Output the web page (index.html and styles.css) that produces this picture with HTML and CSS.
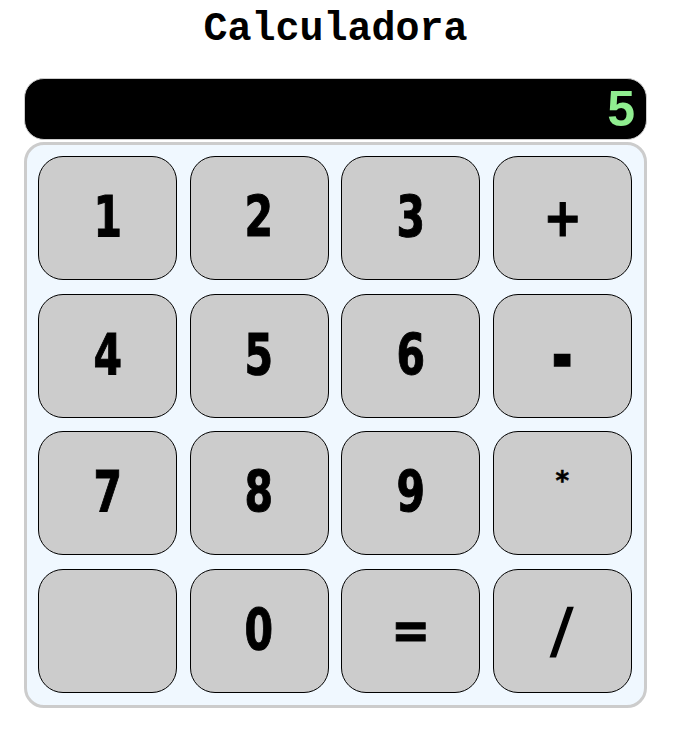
FILE: index.html
```html
<!DOCTYPE html>
<html lang="es">
<head>
<meta charset="utf-8">
<title>Calculadora</title>
<link rel="stylesheet" href="styles.css">
</head>
<body>
<div class="calc">
  <h1 class="title">Calculadora</h1>
  <div class="display">5</div>
  <div class="keypad">
    <button class="key"><span class="glyph">1</span></button>
    <button class="key"><span class="glyph">2</span></button>
    <button class="key"><span class="glyph">3</span></button>
    <button class="key"><span class="glyph glyph-op">+</span></button>
    <button class="key"><span class="glyph">4</span></button>
    <button class="key"><span class="glyph">5</span></button>
    <button class="key"><span class="glyph">6</span></button>
    <button class="key"><span class="glyph glyph-minus">-</span></button>
    <button class="key"><span class="glyph">7</span></button>
    <button class="key"><span class="glyph">8</span></button>
    <button class="key"><span class="glyph">9</span></button>
    <button class="key"><span class="glyph glyph-star">*</span></button>
    <button class="key"></button>
    <button class="key"><span class="glyph">0</span></button>
    <button class="key"><span class="glyph glyph-op">=</span></button>
    <button class="key"><span class="glyph glyph-slash">/</span></button>
  </div>
</div>
</body>
</html>
```
FILE: styles.css
```css
html, body {
  margin: 0;
  padding: 0;
  background: #ffffff;
}

.calc {
  width: 623px;
  margin-left: 24px;
  display: flex;
  flex-direction: column;
}

.title {
  margin: 7px 0 26px 0;
  font-family: "Liberation Mono", "Courier New", monospace;
  font-weight: bold;
  font-size: 40px;
  line-height: 45px;
  text-align: center;
  color: #000;
}

.display {
  box-sizing: border-box;
  height: 62px;
  background: #000;
  border: 1px solid #cccccc;
  border-radius: 20px;
  color: #90ee90;
  font-family: "Liberation Sans", Arial, sans-serif;
  font-weight: bold;
  font-size: 50px;
  display: flex;
  align-items: center;
  justify-content: flex-end;
  padding-right: 11px;
  margin-bottom: 2px;
}

.keypad {
  box-sizing: border-box;
  background: #f0f8ff;
  border: 3px solid #cccccc;
  border-radius: 20px;
  padding: 11px 11px 12px 11px;
  display: grid;
  grid-template-columns: repeat(4, 139px);
  grid-auto-rows: 124px;
  column-gap: 12.6px;
  row-gap: 13.6px;
}

.key {
  box-sizing: border-box;
  background: #cccccc;
  border: 1px solid #000;
  border-radius: 25px;
  padding: 0;
  margin: 0;
  color: #000;
  display: flex;
  align-items: center;
  justify-content: center;
}

.glyph {
  display: inline-block;
  font-family: "DejaVu Sans", "Liberation Sans", sans-serif;
  font-weight: bold;
  font-size: 54px;
  line-height: 1;
  transform: scale(0.76, 1.04);
  -webkit-text-stroke: 1px #000;
}

.glyph-op {
  transform: scale(0.86, 1);
}

.glyph-minus {
  transform: scale(0.95, 1.5);
}

.glyph-star {
  font-size: 26px;
  transform: translateY(-12px);
  -webkit-text-stroke: 0.5px #000;
}

.glyph-slash {
  transform: scale(0.85, 1.1) skewX(-8deg);
  -webkit-text-stroke: 1.8px #000;
}
```
